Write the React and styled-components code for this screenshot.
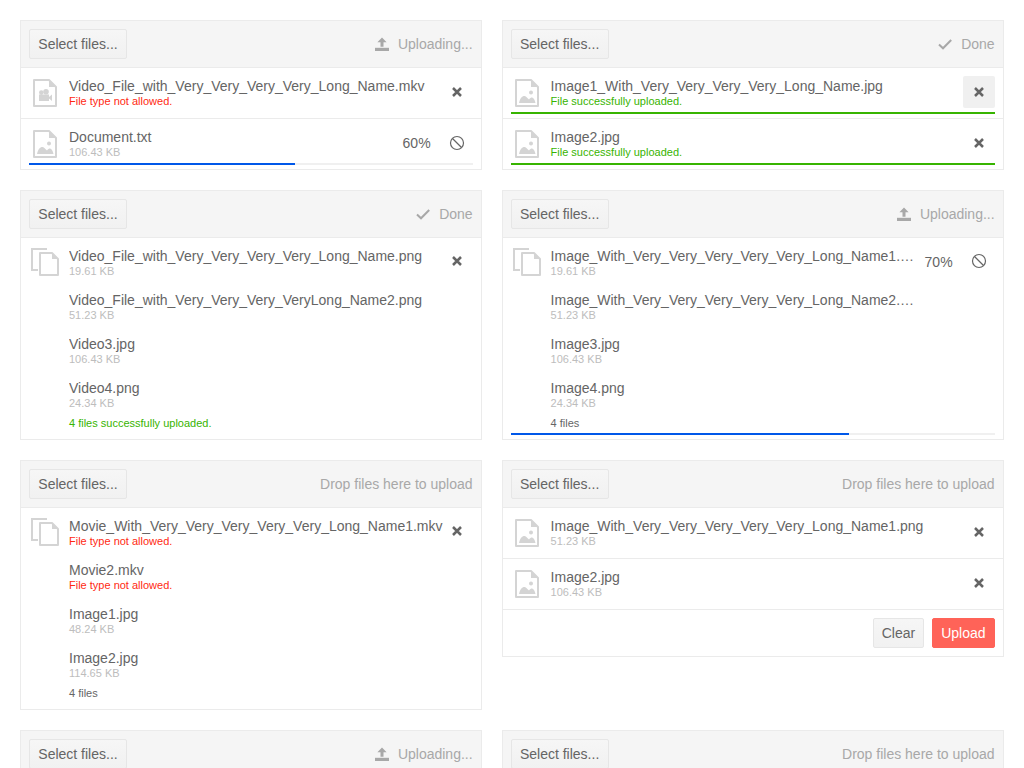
import React from 'react';
import styled, { createGlobalStyle } from 'styled-components';

const GlobalStyle = createGlobalStyle`
  html, body {
    margin: 0;
    height: 768px;
    overflow: hidden;
    background: #fff;
    font-family: "Liberation Sans", Arial, sans-serif;
    font-size: 14px;
    color: #656565;
  }
`;

const Page = styled.div`
  display: grid;
  grid-template-columns: 461.6px 502px;
  gap: 20px;
  padding: 20px;
  align-items: start;
`;

const Card = styled.section`
  border: 1px solid #ebebeb;
  background: #fff;
`;

const Toolbar = styled.header`
  display: flex;
  align-items: center;
  justify-content: space-between;
  height: 47px;
  padding: 0 8px;
  box-sizing: border-box;
  background: #f5f5f5;
  border-bottom: 1px solid #ebebeb;
`;

const Button = styled.button`
  min-width: ${(props) => props.$minWidth || 0}px;
  height: 30px;
  padding: 0 8px;
  box-sizing: border-box;
  font: inherit;
  color: ${(props) => (props.$primary ? '#fff' : '#656565')};
  background: ${(props) => (props.$primary ? '#ff6358' : 'linear-gradient(#f6f6f6, #f1f1f1)')};
  border: 1px solid ${(props) => (props.$primary ? '#ff6358' : '#e6e6e6')};
  border-radius: 2px;
`;

const Status = styled.div`
  display: flex;
  align-items: center;
  gap: 9px;
  color: #a8a8a8;
`;

const Row = styled.div`
  position: relative;
  display: flex;
  align-items: center;
  height: 50px;
  padding: 0 8px 0 12px;
  & + & {
    border-top: 1px solid #ebebeb;
  }
`;

const Batch = styled.div`
  position: relative;
  display: flex;
  align-items: flex-start;
  padding: 10px 8px 9px 10px;
`;

const BatchLines = styled.div`
  flex: 1;
  min-width: 0;
  display: grid;
  gap: 14px;
  margin-left: 10px;
`;

const Info = styled.div`
  flex: 1;
  min-width: 0;
  margin-left: ${(props) => props.$gap ?? 12}px;
`;

const Name = styled.div`
  height: 17px;
  line-height: 17px;
  color: #656565;
  white-space: nowrap;
  overflow: hidden;
  text-overflow: ellipsis;
`;

const Meta = styled.div`
  height: 13px;
  line-height: 13px;
  font-size: 11px;
  color: ${(props) => (props.$tone === 'error' ? '#ff2a12' : props.$tone === 'success' ? '#37b400' : '#bdbdbd')};
`;

const BatchFoot = styled.div`
  height: 13px;
  line-height: 13px;
  font-size: 11px;
  margin-top: -7px;
  color: ${(props) => (props.$success ? '#37b400' : '#656565')};
`;

const Percent = styled.span`
  flex: none;
  margin: -2px 0 0 10px;
  line-height: 32px;
  color: #656565;
`;

const Action = styled.div`
  flex: none;
  width: 32px;
  height: 32px;
  margin: ${(props) => (props.$batch ? '-3px' : '-2px')} 0 0 ${(props) => (props.$tight ? '-2px' : '10px')};
  display: flex;
  align-items: center;
  justify-content: center;
  border-radius: 2px;
  background: ${(props) => (props.$hover ? '#f0f0f0' : 'transparent')};
`;

const Track = styled.div`
  position: absolute;
  left: 8px;
  right: 8px;
  bottom: 4px;
  height: 2px;
  background: #f0f0f0;
`;

const Fill = styled.div`
  height: 100%;
  background: ${(props) => (props.$done ? '#37b400' : '#0058e9')};
`;

const Footer = styled.footer`
  display: flex;
  justify-content: flex-end;
  gap: 8px;
  padding: 8px;
  border-top: 1px solid #ebebeb;
`;

const Glyph = styled.svg`
  flex: none;
  display: block;
`;

const UploadIcon = () => (
  <Glyph width="14" height="14" viewBox="0 0 14 14">
    <path d="M7 0.6 L11.6 5.2 H8.5 V9.7 H5.5 V5.2 H2.4 Z" fill="#a8a8a8" />
    <rect x="0" y="10.8" width="14" height="3.2" fill="#a8a8a8" />
  </Glyph>
);

const CheckIcon = () => (
  <Glyph width="14" height="11" viewBox="0 0 14 11">
    <path d="M1 5.5 L5 9.3 L13.2 1" fill="none" stroke="#a8a8a8" strokeWidth="2" />
  </Glyph>
);

const CloseIcon = () => (
  <Glyph width="12" height="12" viewBox="0 0 12 12">
    <path d="M2 2 L10 10 M10 2 L2 10" fill="none" stroke="#656565" strokeWidth="2.5" />
  </Glyph>
);

const CancelIcon = () => (
  <Glyph width="16" height="16" viewBox="0 0 16 16">
    <circle cx="8" cy="8" r="6.5" fill="none" stroke="#656565" strokeWidth="1.2" />
    <path d="M3.5 3.5 L12.5 12.5" stroke="#656565" strokeWidth="1.2" />
  </Glyph>
);

const FileIcon = ({ video }) => (
  <Glyph width="24" height="28" viewBox="0 0 24 28">
    <path d="M1 1 H16 L23 8 V27 H1 Z" fill="none" stroke="#d4d4d4" strokeWidth="2" strokeLinejoin="round" />
    <path d="M16 1 V8 H23 Z" fill="#d4d4d4" />
    {video ? (
      <>
        <circle cx="8.3" cy="13.6" r="2.3" fill="#d4d4d4" />
        <circle cx="13" cy="12.8" r="2.8" fill="#d4d4d4" />
        <rect x="6" y="15.5" width="10" height="6.5" fill="#d4d4d4" />
        <path d="M16 18 L19 15.5 V22 L16 19.5 Z" fill="#d4d4d4" />
      </>
    ) : (
      <>
        <circle cx="16" cy="13.5" r="2" fill="#d4d4d4" />
        <path d="M4 24 C5 19.5 7 17 9.5 17 C11.5 17 12.5 19.5 14 20.5 C15 19 16 18.5 17 18.5 C18.5 18.5 20 21 20.5 24 Z" fill="#d4d4d4" />
      </>
    )}
  </Glyph>
);

const BatchIcon = () => (
  <Glyph width="28" height="28" viewBox="0 0 28 28">
    <path d="M7 22 H1 V1 H16" fill="none" stroke="#d4d4d4" strokeWidth="2" />
    <path d="M9 5 H21 L27 11 V27 H9 Z" fill="#fff" stroke="#d4d4d4" strokeWidth="2" strokeLinejoin="round" />
    <path d="M21 5 V11 H27 Z" fill="#d4d4d4" />
  </Glyph>
);

const ToolbarStatus = ({ state }) => {
  if (state === 'uploading')
    return (
      <Status>
        <UploadIcon />
        Uploading...
      </Status>
    );
  if (state === 'done')
    return (
      <Status>
        <CheckIcon />
        Done
      </Status>
    );
  return <Status>Drop files here to upload</Status>;
};

const SingleRow = ({ name, meta, tone, video, percent, done, hover }) => (
  <Row>
    <FileIcon video={video} />
    <Info>
      <Name>{name}</Name>
      <Meta $tone={tone}>{meta}</Meta>
    </Info>
    {percent && <Percent>{percent}%</Percent>}
    <Action $hover={hover}>{percent ? <CancelIcon /> : <CloseIcon />}</Action>
    {percent && (
      <Track>
        <Fill style={{ width: `${percent}%` }} />
      </Track>
    )}
    {done && (
      <Track>
        <Fill $done style={{ width: '100%' }} />
      </Track>
    )}
  </Row>
);

const BatchRow = ({ files, foot, success, percent }) => (
  <Batch>
    <BatchIcon />
    <BatchLines>
      {files.map(([name, meta, tone]) => (
        <Info key={name} $gap={0}>
          <Name>{name}</Name>
          <Meta $tone={tone}>{meta}</Meta>
        </Info>
      ))}
      <BatchFoot $success={success}>{foot}</BatchFoot>
    </BatchLines>
    {percent && <Percent>{percent}%</Percent>}
    <Action $batch $tight={!percent}>{percent ? <CancelIcon /> : <CloseIcon />}</Action>
    {percent && (
      <Track>
        <Fill style={{ width: `${percent}%` }} />
      </Track>
    )}
  </Batch>
);

const UploadCard = ({ state, children }) => (
  <Card>
    <Toolbar>
      <Button $minWidth={98}>Select files...</Button>
      <ToolbarStatus state={state} />
    </Toolbar>
    {children}
  </Card>
);

const App = () => (
  <>
    <GlobalStyle />
    <Page>
      <UploadCard state="uploading">
        <SingleRow name="Video_File_with_Very_Very_Very_Very_Long_Name.mkv" meta="File type not allowed." tone="error" video />
        <SingleRow name="Document.txt" meta="106.43 KB" percent={60} />
      </UploadCard>
      <UploadCard state="done">
        <SingleRow name="Image1_With_Very_Very_Very_Very_Long_Name.jpg" meta="File successfully uploaded." tone="success" done hover />
        <SingleRow name="Image2.jpg" meta="File successfully uploaded." tone="success" done />
      </UploadCard>
      <UploadCard state="done">
        <BatchRow
          files={[
            ['Video_File_with_Very_Very_Very_Very_Long_Name.png', '19.61 KB'],
            ['Video_File_with_Very_Very_Very_VeryLong_Name2.png', '51.23 KB'],
            ['Video3.jpg', '106.43 KB'],
            ['Video4.png', '24.34 KB'],
          ]}
          foot="4 files successfully uploaded."
          success
        />
      </UploadCard>
      <UploadCard state="uploading">
        <BatchRow
          files={[
            ['Image_With_Very_Very_Very_Very_Very_Long_Name1.png', '19.61 KB'],
            ['Image_With_Very_Very_Very_Very_Very_Long_Name2.png', '51.23 KB'],
            ['Image3.jpg', '106.43 KB'],
            ['Image4.png', '24.34 KB'],
          ]}
          foot="4 files"
          percent={70}
        />
      </UploadCard>
      <UploadCard>
        <BatchRow
          files={[
            ['Movie_With_Very_Very_Very_Very_Very_Long_Name1.mkv', 'File type not allowed.', 'error'],
            ['Movie2.mkv', 'File type not allowed.', 'error'],
            ['Image1.jpg', '48.24 KB'],
            ['Image2.jpg', '114.65 KB'],
          ]}
          foot="4 files"
        />
      </UploadCard>
      <UploadCard>
        <SingleRow name="Image_With_Very_Very_Very_Very_Very_Long_Name1.png" meta="51.23 KB" />
        <SingleRow name="Image2.jpg" meta="106.43 KB" />
        <Footer>
          <Button>Clear</Button>
          <Button $primary>Upload</Button>
        </Footer>
      </UploadCard>
      <UploadCard state="uploading">
        <SingleRow name="Image1.jpg" meta="48.24 KB" percent={40} />
      </UploadCard>
      <UploadCard>
        <SingleRow name="Image2.jpg" meta="114.65 KB" />
      </UploadCard>
    </Page>
  </>
);

export default App;
